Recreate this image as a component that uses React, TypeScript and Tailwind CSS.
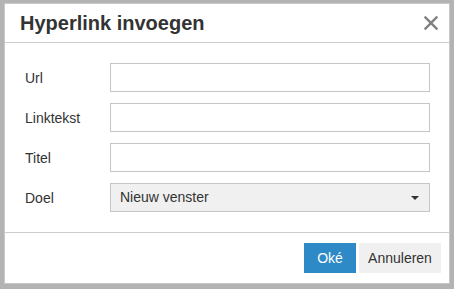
import { X } from "lucide-react";

const fields = ["Url", "Linktekst", "Titel"];

export default function App() {
  return (
    <div className="w-[454px] h-[289px] bg-[#b3b3b3] pt-[3px] pl-[4px] font-['Liberation_Sans',Arial,sans-serif] text-[#333]">
      <div className="w-[446px] h-[281px] bg-white border border-[#c8c8c8] flex flex-col">
        {/* Header */}
        <div className="h-[39px] border-b border-[#ccc] flex items-center justify-between pl-[15px] pr-[7px]">
          <h1 className="text-[20px] font-bold text-[#333] leading-none">Hyperlink invoegen</h1>
          <X size={22} strokeWidth={2.6} strokeLinecap="square" className="text-[#808080]" />
        </div>

        {/* Form */}
        <div className="flex-1 flex flex-col gap-[11px] pt-[20px] pl-[20px] pr-[19px]">
          {fields.map((f) => (
            <div key={f} className="flex items-center">
              <label className="w-[85px] text-[14px] pt-[1px]">{f}</label>
              <div className="flex-1 h-[29px] border border-[#c5c5c5] bg-white" />
            </div>
          ))}
          <div className="flex items-center">
            <label className="w-[85px] text-[14px] pt-[1px]">Doel</label>
            <div className="flex-1 h-[29px] border border-[#c5c5c5] bg-[#f0f0f0] flex items-center justify-between pl-[9px] pr-[10px]">
              <span className="text-[14px]">Nieuw venster</span>
              <span className="w-0 h-0 border-l-[4px] border-r-[4px] border-t-[4px] border-l-transparent border-r-transparent border-t-[#333]" />
            </div>
          </div>
        </div>

        {/* Footer */}
        <div className="h-[51px] border-t border-[#ccc] flex items-start justify-end gap-[3px] pt-[10px] pr-[8px]">
          <button className="w-[52px] h-[30px] bg-[#2d8ac7] text-white text-[14px]">Oké</button>
          <button className="w-[82px] h-[30px] bg-[#f0f0f0] text-[#333] text-[14px]">Annuleren</button>
        </div>
      </div>
    </div>
  );
}
